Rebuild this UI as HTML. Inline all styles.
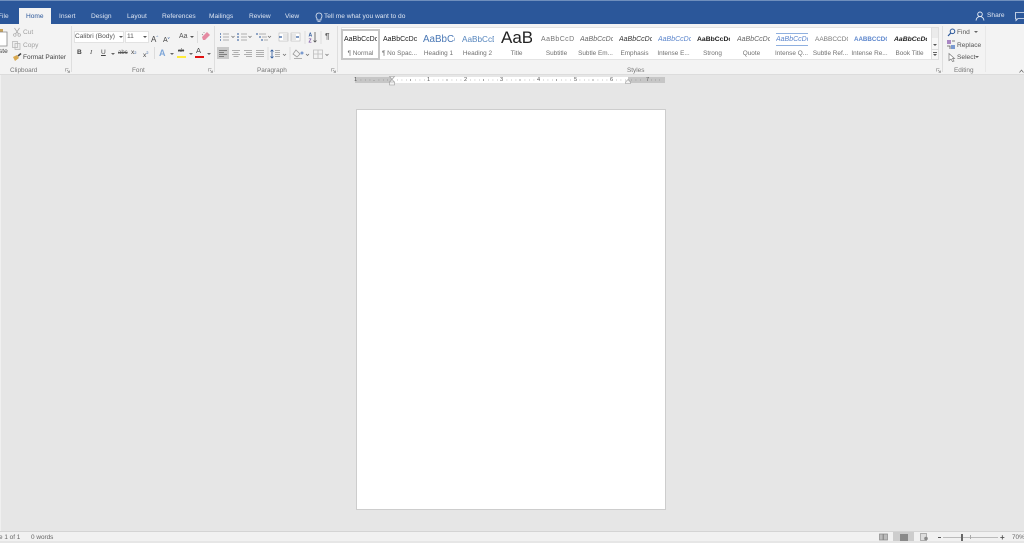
<!DOCTYPE html>
<html><head><meta charset="utf-8">
<style>
html,body{margin:0;padding:0;width:1024px;height:541px;overflow:hidden;background:#e6e6e6;font-family:"Liberation Sans",sans-serif}
.a{position:absolute}
.t{position:absolute;white-space:nowrap;font-size:6.6px;line-height:10px;color:#555}
.tab{position:absolute;top:12px;font-size:6.6px;line-height:10px;color:#dfe6f2;white-space:nowrap}
.s{position:absolute;top:35px;height:10px;font-size:7px;line-height:10px;white-space:nowrap;overflow:hidden;color:#222}
.l{position:absolute;top:49px;font-size:6.4px;line-height:10px;color:#707070;white-space:nowrap;text-align:center}
.g{position:absolute;top:65px;font-size:6.4px;line-height:10px;color:#777;white-space:nowrap}
.sep{position:absolute;top:24px;width:1px;height:46px;background:#dedede}
svg{position:absolute;overflow:visible}
.num{position:absolute;top:75px;font-size:5.6px;line-height:10px;color:#555}
.w{position:absolute;left:0;top:2px;width:1024px;height:0}
</style></head>
<body>
<div class="a" style="left:0;top:0;width:1024px;height:24px;background:#2b579a"></div>
<div class="a" style="left:0;top:0;width:1024px;height:1px;background:#6f8fbd"></div>
<div class="a" style="left:19px;top:8px;width:32px;height:17px;background:#f3f3f3"></div>
<div class="tab" style="left:-2px">File</div>
<div class="tab" style="left:26px;color:#2b579a">Home</div>
<div class="tab" style="left:59px">Insert</div>
<div class="tab" style="left:91px">Design</div>
<div class="tab" style="left:127px">Layout</div>
<div class="tab" style="left:162px">References</div>
<div class="tab" style="left:209px">Mailings</div>
<div class="tab" style="left:249px">Review</div>
<div class="tab" style="left:285px">View</div>
<svg style="left:315px;top:12px" width="8" height="10" viewBox="0 0 8 10"><path d="M2 6.500C.5 5 .5 1 4 1s3.500 4 2 5.500V8H2zM2.500 9.300h3" fill="none" stroke="#dfe6f2" stroke-width=".8"/></svg>
<div class="tab" style="left:324px">Tell me what you want to do</div>
<svg style="left:975px;top:11px" width="10" height="10" viewBox="0 0 10 10"><path d="M5 1a2.300 2.300 0 1 1 0 4.600A2.300 2.300 0 0 1 5 1zM1 9.500C1.500 6.500 3 5.600 5 5.600s3.500.9 4 3.900" fill="none" stroke="#e6ecf5" stroke-width=".9"/></svg>
<div class="tab" style="left:987px;top:11px">Share</div>
<svg style="left:1015px;top:12px" width="10" height="9" viewBox="0 0 10 9"><path d="M.5.500h9v6H3L1 8.500V6.500H.5z" fill="none" stroke="#e6ecf5" stroke-width=".8"/></svg>

<div class="a" style="left:0;top:24px;width:1024px;height:50px;background:#f3f3f3"></div>
<div class="a" style="left:0;top:74px;width:1024px;height:1px;background:#dcdcdc"></div>

<div class="w">
<!-- clipboard -->
<svg style="left:0;top:24px" width="8" height="24" viewBox="0 0 8 24"><rect x="-4" y="3" width="7" height="3" fill="#c9a35b"/><path d="M-1 6H7V20H-1z" fill="#fff" stroke="#888" stroke-width=".8"/></svg>
<div class="t" style="left:-1px;top:45px;color:#444">ste</div>
<svg style="left:13px;top:26px" width="8" height="9" viewBox="0 0 8 9"><path d="M1.500 0L5.500 6M6.500 0L2.500 6" stroke="#aaa" stroke-width=".8"/><circle cx="1.800" cy="7" r="1.300" fill="none" stroke="#aaa" stroke-width=".7"/><circle cx="6.200" cy="7" r="1.300" fill="none" stroke="#aaa" stroke-width=".7"/></svg>
<div class="t" style="left:23px;top:26px;color:#a0a0a0">Cut</div>
<svg style="left:12px;top:39px" width="9" height="9" viewBox="0 0 9 9"><path d="M.5.500h5v6h-5zM3 2.500h5v6H3z" fill="#eee" stroke="#b5b5b5" stroke-width=".7"/></svg>
<div class="t" style="left:23px;top:39px;color:#a0a0a0">Copy</div>
<svg style="left:13px;top:51px" width="9" height="8" viewBox="0 0 9 8"><path d="M0 4L4 2 6 5 2 8z" fill="#d9a950"/><path d="M5 3L8 .5" stroke="#444" stroke-width="1.600"/></svg>
<div class="t" style="left:23px;top:51px;color:#444;font-size:6.500px">Format Painter</div>
<div class="g" style="left:10px;top:64px">Clipboard</div>
<svg style="left:65px;top:66px" width="5" height="5" viewBox="0 0 5 5"><path d="M.5.500h3M.5.500v3M2 2l2.500 2.500M4.500 2.500v2h-2" fill="none" stroke="#888" stroke-width=".6"/></svg>
<div class="sep" style="left:71px"></div>

<!-- font -->
<div class="a" style="left:74px;top:29px;width:50px;height:12px;background:#fff;border:1px solid #e2e2e2;box-sizing:border-box"></div>
<div class="t" style="left:75px;top:30px;color:#555;font-size:6.600px">Calibri (Body)</div>
<div class="a" style="left:119px;top:34px;border:2px solid transparent;border-top:2px solid #555;border-bottom:0"></div>
<div class="a" style="left:125px;top:29px;width:24px;height:12px;background:#fff;border:1px solid #e2e2e2;box-sizing:border-box"></div>
<div class="t" style="left:127px;top:30px;color:#555">11</div>
<div class="a" style="left:143px;top:34px;border:2px solid transparent;border-top:2px solid #555;border-bottom:0"></div>
<div class="t" style="left:151px;top:30px;font-size:8px;color:#444">A<span style="font-size:4px;vertical-align:4px;color:#2b579a">^</span></div>
<div class="t" style="left:163px;top:31px;font-size:7px;color:#444">A<span style="font-size:4px;vertical-align:3px;color:#2b579a">v</span></div>
<div class="t" style="left:179px;top:30px;font-size:7px;color:#555">Aa</div>
<div class="a" style="left:190px;top:34px;border:2px solid transparent;border-top:2px solid #555;border-bottom:0"></div>
<div class="a" style="left:197px;top:29px;width:1px;height:12px;background:#dcdcdc"></div>
<svg style="left:201px;top:29px" width="10" height="10" viewBox="0 0 10 10"><path d="M1 6L6 1l3 3-5 5H2z" fill="#e58aa2"/><path d="M1 3l1 1M3 1v1" stroke="#777" stroke-width=".6"/></svg>
<div class="t" style="left:77px;top:46px;font-weight:bold;color:#444">B</div>
<div class="t" style="left:90px;top:46px;font-style:italic;font-family:'Liberation Serif',serif;color:#444">I</div>
<div class="t" style="left:101px;top:46px;text-decoration:underline;color:#444">U</div>
<div class="a" style="left:111px;top:51px;border:2px solid transparent;border-top:2px solid #666;border-bottom:0"></div>
<div class="t" style="left:118px;top:46px;font-size:6px;text-decoration:line-through;color:#555">abc</div>
<div class="t" style="left:131px;top:46px;color:#444">x<span style="font-size:4px;color:#2b579a">2</span></div>
<div class="t" style="left:143px;top:46px;color:#444">x<span style="font-size:4px;vertical-align:3px;color:#2b579a">2</span></div>
<div class="a" style="left:154px;top:45px;width:1px;height:12px;background:#dcdcdc"></div>
<div class="t" style="left:159px;top:46px;font-size:9px;color:#7ea6d8;font-weight:bold">A</div>
<div class="a" style="left:170px;top:51px;border:2px solid transparent;border-top:2px solid #666;border-bottom:0"></div>
<div class="t" style="left:178px;top:44px;font-size:5.500px;color:#444;text-decoration:line-through">ab</div>
<div class="a" style="left:177px;top:54px;width:9px;height:2px;background:#ffeb3b"></div>
<div class="a" style="left:189px;top:51px;border:2px solid transparent;border-top:2px solid #666;border-bottom:0"></div>
<div class="t" style="left:196px;top:44px;font-size:7.500px;color:#444">A</div>
<div class="a" style="left:195px;top:54px;width:9px;height:2px;background:#e01010"></div>
<div class="a" style="left:207px;top:51px;border:2px solid transparent;border-top:2px solid #666;border-bottom:0"></div>
<div class="g" style="left:132px;top:64px">Font</div>
<svg style="left:208px;top:66px" width="5" height="5" viewBox="0 0 5 5"><path d="M.5.500h3M.5.500v3M2 2l2.500 2.500M4.500 2.500v2h-2" fill="none" stroke="#888" stroke-width=".6"/></svg>
<div class="sep" style="left:214px"></div>

<!-- paragraph -->
<svg style="left:217px;top:29px" width="120" height="30" viewBox="0 0 120 30" fill="none">
<path d="M3 3h1M3 6h1M3 9h1" stroke="#2b579a" stroke-width="1.200"/><path d="M6 3h6M6 6h6M6 9h6" stroke="#999" stroke-width=".8"/>
<path d="M14.500 5l1.500 1.500L17.500 5" stroke="#666" stroke-width=".7"/>
<path d="M21 2v2M21 5v2M21 8v2" stroke="#2b579a" stroke-width="1"/><path d="M24 3h6M24 6h6M24 9h6" stroke="#999" stroke-width=".8"/>
<path d="M31.500 5l1.500 1.500L34.500 5" stroke="#666" stroke-width=".7"/>
<path d="M39 3h2M42 6h2M44 9h2" stroke="#2b579a" stroke-width="1"/><path d="M42 3h7M45 6h5M47 9h4" stroke="#999" stroke-width=".8"/>
<path d="M51 5l1.500 1.500L54 5" stroke="#666" stroke-width=".7"/>
<rect x="62" y="2" width="9" height="8" fill="#fff" stroke="#aaa" stroke-width=".5"/><path d="M66 4h5M66 6h5M66 8h5" stroke="#999" stroke-width=".6"/><path d="M65 6h-3" stroke="#2b579a" stroke-width="1.200"/>
<rect x="74" y="2" width="9" height="8" fill="#fff" stroke="#aaa" stroke-width=".5"/><path d="M74 4h5M74 6h5M74 8h5" stroke="#999" stroke-width=".6"/><path d="M79 6h3" stroke="#2b579a" stroke-width="1.200"/>
<path d="M88 0v13" stroke="#dcdcdc"/>
<text x="91.500" y="5.500" font-size="5" font-family="Liberation Sans" fill="#2b579a" font-weight="bold">A</text>
<text x="91.500" y="11.500" font-size="5" font-family="Liberation Sans" fill="#7a4fa3" font-weight="bold">Z</text>
<path d="M98 1v10M96.500 9.500L98 11l1.500-1.500" stroke="#555" stroke-width=".8"/>
<path d="M104 0v13" stroke="#dcdcdc"/>
<g transform="translate(0,1)">
<rect x="0" y="15" width="12" height="12" fill="#c9c9c9"/>
<path d="M2 18.500h8M2 20.500h5M2 22.500h8M2 24.500h5" stroke="#666" stroke-width=".8"/>
<path d="M15 18.500h8M16.500 20.500h5M15 22.500h8M16.500 24.500h5M27 18.500h8M29 20.500h6M27 22.500h8M29 24.500h6M39 18.500h8M39 20.500h8M39 22.500h8M39 24.500h8" stroke="#999" stroke-width=".8"/>
<path d="M51 15v13" stroke="#dcdcdc"/>
<path d="M55 18v8M53.500 19.500L55 18l1.500 1.500M53.500 24.500L55 26l1.500-1.500" stroke="#2b579a" stroke-width=".8"/><path d="M58 18.500h5M58 20.500h5M58 22.500h5M58 24.500h5" stroke="#999" stroke-width=".8"/>
<path d="M66 22l1.500 1.500L69 22" stroke="#666" stroke-width=".7"/>
<path d="M73 15v13" stroke="#dcdcdc"/>
<path d="M79 18l4 4-3 3-4-3zM77 26.500h8" stroke="#999" stroke-width=".8"/><circle cx="85" cy="21" r="1.500" fill="#7a9ad0"/>
<path d="M89 22l1.500 1.500L92 22" stroke="#666" stroke-width=".7"/>
<path d="M96.500 18h9v8.500h-9zM101 18v8.500M96.500 22h9" stroke="#bbb" stroke-width=".8"/>
<path d="M108.500 22l1.500 1.500 1.500-1.500" stroke="#666" stroke-width=".7"/>
</g>
</svg>
<div class="t" style="left:325px;top:30px;font-size:8px;font-weight:bold;color:#666">¶</div>
<div class="g" style="left:257px;top:64px">Paragraph</div>
<svg style="left:331px;top:66px" width="5" height="5" viewBox="0 0 5 5"><path d="M.5.500h3M.5.500v3M2 2l2.500 2.500M4.500 2.500v2h-2" fill="none" stroke="#888" stroke-width=".6"/></svg>
<div class="sep" style="left:337px"></div>

<!-- editing -->
<svg style="left:947px;top:26px" width="9" height="9" viewBox="0 0 9 9" fill="none"><circle cx="5.500" cy="3.300" r="2.300" stroke="#2b579a" stroke-width="1"/><path d="M3.800 5L1 8" stroke="#2b579a" stroke-width="1.200"/></svg>
<div class="t" style="left:957px;top:26px;color:#555">Find</div>
<div class="a" style="left:974px;top:29px;border:2px solid transparent;border-top:2px solid #666;border-bottom:0"></div>
<svg style="left:946px;top:38px" width="10" height="10" viewBox="0 0 10 10"><rect x="1" y="0" width="4" height="4" fill="#a987c4"/><rect x="5" y="5" width="4" height="4" fill="#7a9ad0"/><path d="M6 1h3M1 6h3v3" stroke="#555" stroke-width=".8" fill="none"/></svg>
<div class="t" style="left:957px;top:39px;color:#555">Replace</div>
<svg style="left:948px;top:51px" width="7" height="9" viewBox="0 0 7 9"><path d="M1 .5v7l2-1.500 1.500 2.500L6 8 4.500 5.500H6.500z" fill="#fff" stroke="#777" stroke-width=".7"/></svg>
<div class="t" style="left:957px;top:51px;color:#555">Select</div>
<div class="a" style="left:975px;top:54px;border:2px solid transparent;border-top:2px solid #666;border-bottom:0"></div>
<div class="g" style="left:954px;top:64px">Editing</div>
<div class="sep" style="left:942px"></div>
<div class="sep" style="left:985px;background:#e8e8e8"></div>
</div>

<!-- styles -->
<div class="a" style="left:341px;top:27px;width:598px;height:33px;background:#fff;border:1px solid #e4e4e4;box-sizing:border-box"></div>
<div class="a" style="left:341px;top:29px;width:39px;height:31px;background:#fff;border:2px solid #c6c6c6;box-sizing:border-box"></div>
<div class="s" style="left:344px;width:33px;color:#222">AaBbCcDc</div>
<div class="s" style="left:383px;width:34px;color:#222">AaBbCcDc</div>
<div class="s" style="left:423px;top:33px;height:14px;line-height:14px;width:32px;color:#4a78b5;font-size:9.800px">AaBbCc</div>
<div class="s" style="left:462px;top:34px;height:12px;line-height:12px;width:32px;color:#5585bd;font-size:8.200px">AaBbCcD</div>
<div class="s" style="left:501px;top:28px;height:20px;line-height:20px;width:31px;color:#222;font-size:17px">AaB</div>
<div class="s" style="left:541px;width:33px;color:#777;letter-spacing:.4px">AaBbCcD</div>
<div class="s" style="left:580px;width:33px;color:#666;font-style:italic">AaBbCcDc</div>
<div class="s" style="left:619px;width:33px;color:#333;font-style:italic">AaBbCcDc</div>
<div class="s" style="left:658px;width:33px;color:#5b85cc;font-style:italic">AaBbCcDc</div>
<div class="s" style="left:697px;width:33px;color:#222;font-weight:bold;font-size:6.800px">AaBbCcDc</div>
<div class="s" style="left:737px;width:33px;color:#666;font-style:italic">AaBbCcDc</div>
<div class="a" style="left:776px;top:33px;width:32px;height:1px;background:#8fb0e0"></div>
<div class="a" style="left:776px;top:45px;width:32px;height:1px;background:#8fb0e0"></div>
<div class="s" style="left:776px;width:32px;color:#5b85cc;font-style:italic">AaBbCcDc</div>
<div class="s" style="left:815px;width:33px;color:#777;font-size:6.500px">AABBCCDC</div>
<div class="s" style="left:854px;width:33px;color:#5b85cc;font-size:6.200px;font-weight:bold">AABBCCDC</div>
<div class="s" style="left:894px;width:33px;color:#222;font-size:6.800px;font-style:italic;font-weight:bold">AaBbCcDc</div>
<div class="l" style="left:341px;width:39px">¶ Normal</div>
<div class="l" style="left:380px;width:39px">¶ No Spac...</div>
<div class="l" style="left:419px;width:39px">Heading 1</div>
<div class="l" style="left:458px;width:39px">Heading 2</div>
<div class="l" style="left:497px;width:39px">Title</div>
<div class="l" style="left:537px;width:39px">Subtitle</div>
<div class="l" style="left:576px;width:39px">Subtle Em...</div>
<div class="l" style="left:615px;width:39px">Emphasis</div>
<div class="l" style="left:654px;width:39px">Intense E...</div>
<div class="l" style="left:693px;width:39px">Strong</div>
<div class="l" style="left:732px;width:39px">Quote</div>
<div class="l" style="left:772px;width:39px">Intense Q...</div>
<div class="l" style="left:811px;width:39px">Subtle Ref...</div>
<div class="l" style="left:850px;width:39px">Intense Re...</div>
<div class="l" style="left:890px;width:39px">Book Title</div>
<div class="a" style="left:931px;top:27px;width:8px;height:33px;background:#f7f7f7;border:1px solid #dedede;box-sizing:border-box"></div>
<div class="a" style="left:932px;top:28px;width:6px;height:10px;background:#ebebeb"></div>
<div class="a" style="left:933px;top:44px;border:2px solid transparent;border-top:2px solid #555;border-bottom:0"></div>
<div class="a" style="left:932px;top:49px;width:6px;height:1px;background:#ddd"></div>
<div class="a" style="left:933px;top:52px;width:4px;height:1px;background:#666"></div>
<div class="a" style="left:933px;top:54px;border:2px solid transparent;border-top:2px solid #555;border-bottom:0"></div>
<div class="g" style="left:627px;top:66px">Styles</div>
<svg style="left:936px;top:68px" width="5" height="5" viewBox="0 0 5 5"><path d="M.5.500h3M.5.500v3M2 2l2.500 2.500M4.500 2.500v2h-2" fill="none" stroke="#888" stroke-width=".6"/></svg>
<svg style="left:1019px;top:69px" width="5" height="4" viewBox="0 0 5 4"><path d="M.5 3.500L2.500 1l2 2.500" fill="none" stroke="#666" stroke-width=".7"/></svg>

<!-- ruler -->
<div class="a" style="left:355px;top:77px;width:310px;height:6px;background:#c6c6c6"></div>
<div class="a" style="left:392px;top:77px;width:236px;height:6px;background:#fff"></div>
<svg style="left:355px;top:77px" width="310" height="6" viewBox="0 0 310 6"><path d="M5.500 3h.8M10 3h.8M14.500 3h.8M19 3v.8M23.500 3h.8M28 3h.8M32 3h.8M42 3h.8M46.500 3h.8M51 3h.8M55.500 2v2M60 3h.8M64.500 3h.8M69 3h.8M78.500 3h.8M83 3h.8M87.500 3h.8M92 2v2M96.500 3h.8M101 3h.8M105.500 3h.8M115 3h.8M119.500 3h.8M124 3h.8M128.500 2v2M133 3h.8M137.500 3h.8M142 3h.8M151.500 3h.8M156 3h.8M160.500 3h.8M165 2v2M169.500 3h.8M174 3h.8M178.500 3h.8M188 3h.8M192.500 3h.8M197 3h.8M201.500 2v2M206 3h.8M210.500 3h.8M215 3h.8M224.500 3h.8M229 3h.8M233.500 3h.8M238 2v2M242.500 3h.8M247 3h.8M251.500 3h.8M261 3h.8M265.500 3h.8M270 3h.8M296 3h.8M300 3h.8M304 3h.8M276 3h.8M280.500 3h.8M285 3h.8" stroke="#666" stroke-width=".6" fill="none"/></svg>
<div class="num" style="left:354px">1</div>
<div class="num" style="left:427px">1</div>
<div class="num" style="left:464px">2</div>
<div class="num" style="left:500px">3</div>
<div class="num" style="left:537px">4</div>
<div class="num" style="left:574px">5</div>
<div class="num" style="left:610px">6</div>
<div class="num" style="left:646px">7</div>
<svg style="left:389px;top:76px" width="6" height="12" viewBox="0 0 6 12"><path d="M.5.500h5L3 3.500zM3 3.500L.5 6h5zM.5 6h5v3h-5z" fill="#f3f3f3" stroke="#999" stroke-width=".6"/></svg>
<svg style="left:625px;top:79px" width="6" height="5" viewBox="0 0 6 5"><path d="M3 .5L5.500 3v1.500h-5V3z" fill="#f3f3f3" stroke="#999" stroke-width=".6"/></svg>

<!-- page -->
<div class="a" style="left:356px;top:109px;width:310px;height:401px;background:#fff;border:1px solid #cdcdcd;box-sizing:border-box"></div>
<div class="a" style="left:0;top:75px;width:1px;height:456px;background:#f0f0f0"></div>

<!-- status -->
<div class="a" style="left:0;top:531px;width:1024px;height:10px;background:#f1f1f1;border-top:1px solid #d4d4d4;box-sizing:border-box"></div>
<div class="t" style="left:-1px;top:533px;font-size:6.400px;line-height:10px;color:#666">e 1 of 1</div>
<div class="t" style="left:31px;top:533px;font-size:6.400px;line-height:10px;color:#666">0 words</div>
<svg style="left:879px;top:533px" width="9" height="8" viewBox="0 0 9 8"><path d="M.5 1h3.500v6H.5zM4.500 1h4v6h-4z" fill="#bbb" stroke="#888" stroke-width=".7"/></svg>
<div class="a" style="left:893px;top:532px;width:21px;height:9px;background:#cdcdcd"></div>
<div class="a" style="left:900px;top:534px;width:8px;height:7px;background:#8a8a8a"></div>
<svg style="left:920px;top:533px" width="9" height="8" viewBox="0 0 9 8"><path d="M.5.500h6v7h-6z" fill="#ddd" stroke="#999" stroke-width=".7"/><circle cx="6" cy="5.500" r="1.800" fill="#888"/></svg>
<div class="a" style="left:938px;top:537px;width:3px;height:1px;background:#555"></div>
<div class="a" style="left:943px;top:537px;width:55px;height:1px;background:#bbb"></div>
<div class="a" style="left:961px;top:534px;width:2px;height:7px;background:#666"></div>
<div class="a" style="left:970px;top:535px;width:1px;height:4px;background:#aaa"></div>
<div class="t" style="left:1000px;top:532px;font-size:8px;line-height:11px;color:#555;font-weight:bold">+</div>
<div class="t" style="left:1012px;top:533px;font-size:6.400px;line-height:10px;color:#666">70%</div>
</body></html>
